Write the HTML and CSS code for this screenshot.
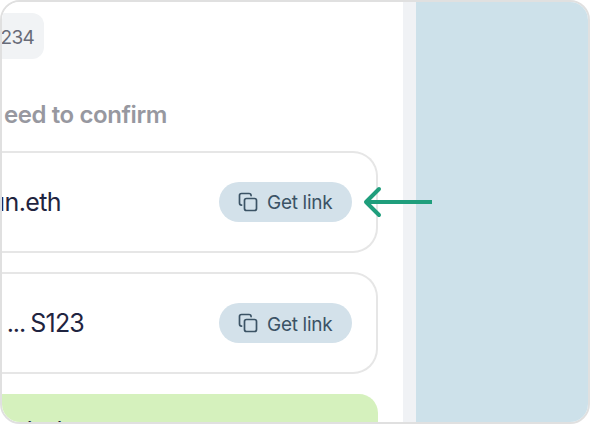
FILE: index.html
```html
<!DOCTYPE html>
<html lang="en">
<head>
<meta charset="utf-8">
<title>Confirmations</title>
<link rel="stylesheet" href="styles.css">
</head>
<body>
<div class="frame">
  <main class="panel">
    <div class="chip"><span>234</span></div>
    <h2 class="heading"><span>eed to confirm</span></h2>
    <section class="card">
      <div class="name name-eth"><span>un.eth</span></div>
      <button class="link-button">
        <svg class="copy" viewBox="0 0 20 20"><path d="M3.6 13.1 Q1.5 13.1 1.5 11 V3.5 Q1.5 1.5 3.5 1.5 H11 Q13.1 1.5 13.1 3.6"/><rect x="6.5" y="6.5" width="12" height="12" rx="2"/></svg>
        <span class="label">Get link</span>
      </button>
    </section>
    <section class="card">
      <div class="name name-short"><span>. <span class="dots">...</span> S123</span></div>
      <button class="link-button">
        <svg class="copy" viewBox="0 0 20 20"><path d="M3.6 13.1 Q1.5 13.1 1.5 11 V3.5 Q1.5 1.5 3.5 1.5 H11 Q13.1 1.5 13.1 3.6"/><rect x="6.5" y="6.5" width="12" height="12" rx="2"/></svg>
        <span class="label">Get link</span>
      </button>
    </section>
    <section class="notice"><div class="notice-text"><span>ind</span></div></section>
  </main>
  <div class="gutter"></div>
  <aside class="backdrop"></aside>
  <svg class="arrow" viewBox="0 0 70 32"><path d="M69 16H3"/><path class="head" d="M16 3L3 16L16 29"/></svg>
</div>
</body>
</html>
```
FILE: styles.css
```css
* { box-sizing: border-box; }
body {
  margin: 0;
  background: #fff;
  font-family: Inter, "Liberation Sans", sans-serif;
}
.frame {
  position: relative;
  display: flex;
  width: 590px;
  height: 424px;
  border: 2px solid #e0e0e0;
  border-radius: 20px;
  overflow: hidden;
}
.panel {
  flex: 0 0 401px;
  padding: 11px 25px 0 0;
  background: #fff;
}
.gutter { flex: 0 0 13px; background: #f0f2f5; }
.backdrop { flex: 1; background: #cde1ea; }
.chip, .heading, .name, .notice-text {
  display: flex;
  justify-content: flex-end;
  white-space: nowrap;
  overflow: hidden;
}
.chip {
  align-items: center;
  width: 42px;
  height: 46px;
  padding-right: 10px;
  padding-top: 2px;
  border-radius: 0 12px 12px 0;
  background: #f1f3f5;
  color: #686b78;
  font-size: 19px;
  letter-spacing: -0.7px;
}
.heading {
  align-items: center;
  width: 165px;
  height: 36px;
  margin: 37px 0 18.5px;
  color: #9798a0;
  font-size: 24px;
  font-weight: 600;
  letter-spacing: -0.4px;
}
.card {
  display: flex;
  align-items: center;
  justify-content: space-between;
  width: 376px;
  height: 102px;
  margin-bottom: 19.5px;
  padding-right: 24px;
  border: 2px solid #e6e6e6;
  border-left: 0;
  border-radius: 0 25px 25px 0;
}
.name {
  color: #1f2440;
  font-size: 25px;
  line-height: 36px;
  letter-spacing: -0.6px;
}
.name-eth { width: 59px; }
.name-short { width: 82px; word-spacing: -1px; letter-spacing: -0.8px; }
.dots { letter-spacing: -1.1px; }
.link-button {
  display: flex;
  align-items: center;
  width: 133px;
  height: 40px;
  padding: 0 0 0 19px;
  border: 0;
  border-radius: 20px;
  background: #d3e1ea;
  color: #3b5365;
  font: 400 19px Inter, "Liberation Sans", sans-serif;
}
.copy {
  width: 20px;
  height: 20px;
  margin-right: 9px;
  fill: none;
  stroke: currentColor;
  stroke-width: 1.7;
  stroke-linecap: round;
}
.label { padding-top: 2px; letter-spacing: -0.3px; white-space: nowrap; }
.notice {
  width: 376px;
  height: 60px;
  padding-top: 19px;
  border-radius: 0 19px 0 0;
  background: #d5f1bd;
}
.notice-text {
  width: 61px;
  color: #1f2440;
  font-size: 24px;
  line-height: 36px;
  letter-spacing: 0.5px;
}
.arrow {
  position: absolute;
  left: 361px;
  top: 184px;
  width: 70px;
  height: 32px;
  fill: none;
  stroke: #1f9e7c;
  stroke-width: 4;
}
.head { stroke-linecap: round; stroke-linejoin: round; }
```
